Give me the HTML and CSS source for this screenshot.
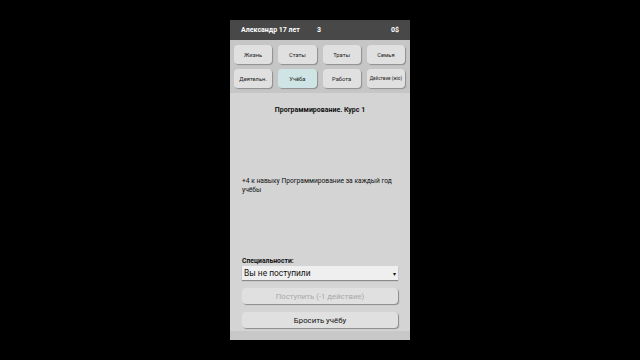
FILE: index.html
```html
<!DOCTYPE html>
<html lang="ru">
<head>
<meta charset="utf-8">
<title>Учёба</title>
<link rel="stylesheet" href="styles.css">
</head>
<body>
<div class="phone">
  <div class="topbar">
    <span class="name">Александр 17 лет</span>
    <span class="actions">3</span>
    <span class="money">0$</span>
  </div>
  <div class="tabs">
    <div class="tab">Жизнь</div>
    <div class="tab">Статы</div>
    <div class="tab">Траты</div>
    <div class="tab">Семья</div>
    <div class="tab">Деятельн.</div>
    <div class="tab active">Учёба</div>
    <div class="tab">Работа</div>
    <div class="tab small">Действие (жіо)</div>
  </div>
  <div class="content">
    <div class="title">Программирование. Курс 1</div>
    <div class="desc">+4 к навыку Программирование за каждый год учёбы</div>
    <div class="bottom">
      <div class="label">Специальности:</div>
      <div class="select"><span>Вы не поступили</span><span class="arrow">▾</span></div>
      <div class="btn disabled">Поступить (-1 действие)</div>
      <div class="btn">Бросить учёбу</div>
    </div>
  </div>
  <div class="footer"></div>
</div>
</body>
</html>
```

FILE: styles.css
```css
html, body {
  margin: 0;
  padding: 0;
  background: #000;
  width: 640px;
  height: 360px;
  overflow: hidden;
  font-family: Roboto, "Liberation Sans", sans-serif;
}
.phone {
  width: 180px;
  height: 320px;
  margin: 20px auto 0;
  display: flex;
  flex-direction: column;
  background: #d4d4d4;
}
.topbar {
  height: 20px;
  flex: none;
  background: #484848;
  color: #fff;
  font-weight: bold;
  font-size: 7px;
  display: grid;
  grid-template-columns: 76px 1fr auto;
  align-items: center;
  padding: 0 11px 0 11px;
}
.tabs {
  flex: none;
  background: #c6c6c6;
  padding: 5px 5px 5px 4px;
  display: grid;
  grid-template-columns: repeat(4, 1fr);
  grid-auto-rows: 19px;
  column-gap: 6px;
  row-gap: 5px;
}
.tab {
  background: #e0e0e0;
  border-radius: 4px;
  box-shadow: 1px 1px 1px #8e8e8e;
  font-size: 5.8px;
  color: #222;
  display: flex;
  align-items: center;
  justify-content: center;
  white-space: nowrap;
}
.tab.active {
  background: #cfe4e4;
}
.tab.small {
  font-size: 4.6px;
}
.content {
  flex: 1;
  display: flex;
  flex-direction: column;
  padding: 12px 12px 3px 12px;
  background: #d4d4d4;
}
.title {
  text-align: center;
  font-weight: bold;
  font-size: 7px;
  line-height: 10px;
  color: #111;
}
.desc {
  margin-top: 62px;
  font-size: 6.7px;
  line-height: 9px;
  color: #111;
}
.bottom {
  margin-top: auto;
}
.label {
  font-weight: bold;
  font-size: 6.8px;
  line-height: 9px;
  color: #111;
}
.select {
  height: 14px;
  background: #efefef;
  box-shadow: 0 1px 1px #8a8a8a;
  display: flex;
  align-items: center;
  justify-content: space-between;
  padding: 0 2px 0 2px;
  font-size: 8.4px;
  color: #111;
}
.arrow {
  font-size: 6px;
}
.btn {
  height: 16px;
  margin-top: 8px;
  background: #e0e0e0;
  border-radius: 4px;
  box-shadow: 1px 1px 1px #8a8a8a;
  display: flex;
  align-items: center;
  justify-content: center;
  font-size: 7.8px;
  color: #111;
}
.btn.disabled {
  color: #a8a8a8;
}
.footer {
  height: 9px;
  flex: none;
  background: #c8c8c8;
}
```
